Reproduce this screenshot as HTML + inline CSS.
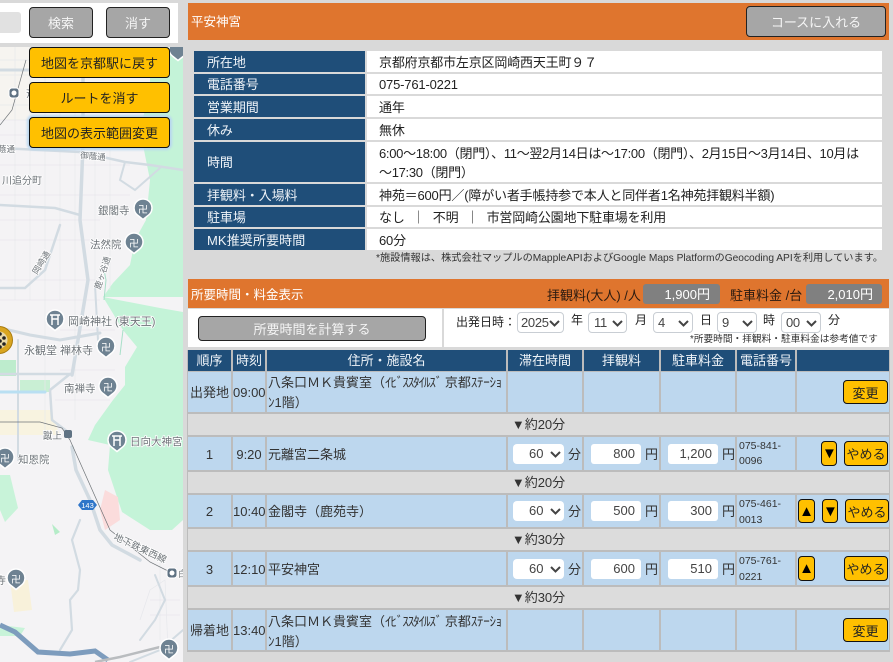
<!DOCTYPE html>
<html lang="ja">
<head>
<meta charset="utf-8">
<title>平安神宮</title>
<style>
html,body{margin:0;padding:0;width:893px;height:662px;overflow:hidden;background:#d9d9d9}
body{position:relative;font-family:"Liberation Sans","Noto Sans CJK JP",sans-serif;font-size:13px;color:#333}
.a{position:absolute;white-space:nowrap;box-sizing:border-box}
.o{background:#df752e}
.l{background:#1f4e79;color:#eef3f8;left:194px;width:171px;padding-left:13px;letter-spacing:-.08px}
.v{background:#fff;color:#222;left:367px;width:515px;padding-left:12px;letter-spacing:-.18px}
.h{background:#1f4e79;color:#eef3f8;top:350px;height:21px;line-height:21px;text-align:center}
.c{background:#bdd7ee}
.s{background:#dcdcdc;left:188px;width:701px;text-align:center;color:#333;height:21px;line-height:21px}
.b{border:1px solid #111;border-radius:4px;background:#ffc000;color:#222;text-align:center;font-family:inherit;font-size:13px;padding:0}
.b.ar{color:#000;font-size:15px;line-height:1;overflow:hidden}
.g{border:1px solid #222;border-radius:4px;background:#a6a6a6;color:#f5f5f5;text-align:center;font-family:inherit;font-size:13px;padding:0}
.i{background:#fff;border-radius:3px;text-align:right;padding-right:6px;color:#444;height:20px;line-height:20px;width:50px;font-size:13px}
.sel{background:#fff;border-radius:4px;color:#444;font-size:13px}
.sel svg{position:absolute;right:3px;top:7px}
.d{border:1px solid #c9ced4;height:21px;line-height:20px;padding-left:3px;top:312px;letter-spacing:-.3px}
.t{height:20px;line-height:20px;width:51px;left:513px;padding-left:16px}
.p{font-size:10.5px;left:739px;color:#333;line-height:14px}
.k{letter-spacing:-1.1px}
.k2{letter-spacing:-.3px}
.tx{font-size:8.5px;fill:#6d7378;font-family:"Liberation Sans","Noto Sans CJK JP",sans-serif;stroke:#fff;stroke-width:1.6px;paint-order:stroke}
.sw{font-size:10px;fill:#fff;font-family:"Noto Sans CJK JP",sans-serif;text-anchor:middle}
</style>
</head>
<body>

<!-- MAP -->
<svg class="a" style="left:0;top:47px" width="183" height="615" viewBox="0 47 183 615">
<rect x="0" y="47" width="183" height="615" fill="#f4f3f5"/>
<path d="M150 47L183 47L183 297L150 297L103 297L113 283L130 265L135 240L146 220L150 180L140 130L150 90Z" fill="#c4f3d8"/>
<path d="M103 297L160 308L183 312L183 520L172 530L150 530L122 512L108 470L110 445L88 440L95 425L113 400L125 385L125 367L137 347L123 330Z" fill="#c4f3d8"/>
<path d="M105 490L118 497L120 520L105 530L100 510Z" fill="#fbdcdc"/>
<path d="M0 360H16V376H0Z" fill="#bdeccd"/><path d="M20 380H50V392H20Z" fill="#c9efd4"/>
<path d="M0 475H10L18 508L5 522L0 510Z" fill="#c8f3d9"/><path d="M0 625L25 628L20 636H0Z" fill="#c8f3d9"/>
<path d="M52 524L60 532L55 535Z" fill="#b5ecc8"/>
<path d="M10 580H28L32 610L14 612Z" fill="#f8f1da"/>
<path d="M0 410H50L60 435H0Z" fill="#f8f3e0"/>
<path d="M0 47H40L60 110L40 120H0Z" fill="#f7f5ed" opacity=".6"/>
<!-- street texture -->
<g stroke="#e7e8ec" stroke-width=".7" fill="none">
<path d="M0 60H90M0 75H80M0 105H100M0 120H110M0 135H120M0 165H130M0 195H130M0 220H100M0 240H90M0 280H100M0 300H100M60 330H115M60 370H115M55 400H110"/>
<path d="M15 47V300M30 47V300M45 47V440M60 100V300M75 110V420M95 120V300M110 150V290"/>
<path d="M140 620L150 590L165 580L168 650M150 600H180M150 615H180M160 560V640"/>
</g>
<!-- main roads -->
<g stroke="#d2dbe2" fill="none" stroke-linecap="round">
<path d="M0 70H40L60 66H85" stroke-width="3"/>
<path d="M83 47V145L80 220L88 280L78 340L72 375" stroke-width="3.5"/>
<path d="M0 148L80 152L125 162L150 165L183 170" stroke-width="2.5"/>
<path d="M125 162L120 180L135 190L160 168" stroke-width="2"/>
<path d="M0 205L55 208L80 215" stroke-width="2.5"/>
<path d="M60 225L45 270L25 288H0" stroke-width="2.5"/>
<path d="M95 285L98 340" stroke-width="2"/>
<path d="M0 328L30 335L60 340L100 333" stroke-width="3"/>
<path d="M18 340V460" stroke-width="2"/>
<path d="M0 374H70M70 374L50 390L52 420L68 432" stroke-width="2.5"/>
<path d="M0 392H45" stroke="#b9dff2" stroke-width="3"/>
<path d="M72 447L76 470L90 500L100 530L112 545L140 560" stroke-width="3.5"/>
<path d="M80 520L72 540L80 570L78 590L70 600L72 630L60 650" stroke-width="2.2"/>
<path d="M155 575L165 600L155 620L140 640" stroke-width="2"/>
<path d="M183 630L160 650L130 662" stroke-width="2"/>
</g>
<path d="M104 300L106 280L103 265" stroke="#a7dfc8" fill="none"/>
<path d="M123 330L120 355" stroke="#a7dfc8" fill="none"/>
<path d="M0 625L15 632L38 652L70 654L95 651L108 660" stroke="#7d9cbd" stroke-width="5" fill="none"/>
<path d="M95 662L120 657L160 647" stroke="#b9bcbf" stroke-width="2.5" fill="none"/>
<path d="M70 440L110 530L150 562L172 573" stroke="#6f7478" stroke-width=".7" fill="none"/>
<path d="M0 422H40L62 428L70 440" stroke="#6f7478" stroke-width=".7" fill="none"/>
<path d="M26 60L12 110L0 125" stroke="#6f7478" stroke-width=".7" fill="none"/>
<!-- 143 shield -->
<path d="M82 500H93L97 505L93 510H82L78 505Z" fill="#2f76c9"/>
<text x="87.500" y="508" font-size="7.500" fill="#fff" text-anchor="middle" font-family="Liberation Sans">143</text>
<!-- labels -->
<text class="tx" x="-2" y="152">蔭通</text>
<text class="tx" x="80" y="158" transform="rotate(5 80 158)">御蔭通</text>
<text class="tx" x="2" y="184" style="font-size:10px">川追分町</text>
<text class="tx" x="98" y="214" style="font-size:10.500px">銀閣寺</text>
<text class="tx" x="90" y="248" style="font-size:10.500px">法然院</text>
<text class="tx" transform="translate(37 275) rotate(-58)">岡崎通</text>
<text class="tx" transform="translate(100 290) rotate(-72)">鹿ヶ谷通</text>
<text class="tx" x="68" y="325" style="font-size:11px">岡崎神社 (東天王)</text>
<text class="tx" x="24" y="354" style="font-size:11px">永観堂 禅林寺</text>
<text class="tx" x="64" y="392" style="font-size:10.500px">南禅寺</text>
<text class="tx" x="43" y="439" style="font-size:9.500px">蹴上</text>
<text class="tx" x="130" y="445" style="font-size:10.500px">日向大神宮</text>
<text class="tx" x="18" y="463" style="font-size:10.500px">知恩院</text>
<text class="tx" x="-4" y="584" style="font-size:10px">寺</text>
<text class="tx" x="26" y="97" style="font-size:9.500px">斉</text>
<text class="tx" transform="translate(113 539) rotate(25)" style="font-size:9.500px">地下鉄東西線</text>
<text class="tx" x="178" y="577" style="font-size:9px">白</text>
<!-- pins -->
<g fill="#6e8292" stroke="#fff" stroke-width="1.500">
<path d="M143 199a9 9 0 0 1 5 16.500l-5 4-5-4A9 9 0 0 1 143 199Z"/>
<path d="M134 233a9 9 0 0 1 5 16.500l-5 4-5-4A9 9 0 0 1 134 233Z"/>
<path d="M106 337a9 9 0 0 1 5 16.500l-5 4-5-4A9 9 0 0 1 106 337Z"/>
<path d="M108 377a9 9 0 0 1 5 16.500l-5 4-5-4A9 9 0 0 1 108 377Z"/>
<path d="M5 448a9 9 0 0 1 5 16.500l-5 4-5-4A9 9 0 0 1 5 448Z"/>
<path d="M16 569a9 9 0 0 1 5 16.500l-5 4-5-4A9 9 0 0 1 16 569Z"/>
<path d="M169 639a9 9 0 0 1 5 16.500l-5 4-5-4A9 9 0 0 1 169 639Z"/>
<path d="M178 40a9 9 0 0 1 5 16.500l-5 4-5-4A9 9 0 0 1 178 40Z"/>
<path d="M55 310a9 9 0 0 1 5 16.500l-5 4-5-4A9 9 0 0 1 55 310Z"/>
<path d="M117 431a9 9 0 0 1 5 16.500l-5 4-5-4A9 9 0 0 1 117 431Z"/>
</g>
<text class="sw" x="143" y="213">卍</text><text class="sw" x="134" y="247">卍</text><text class="sw" x="106" y="351">卍</text><text class="sw" x="108" y="391">卍</text><text class="sw" x="5" y="462">卍</text><text class="sw" x="16" y="583">卍</text><text class="sw" x="169" y="653">卍</text>
<path d="M50 315H60M52 315V325M58 315V325M52 319H58" stroke="#fff" stroke-width="1.500" fill="none"/>
<path d="M112 436H122M114 436V446M120 436V446M114 440H120" stroke="#fff" stroke-width="1.500" fill="none"/>
<rect x="9" y="88" width="10" height="10" rx="3" fill="#5f7283" stroke="#fff"/><circle cx="14" cy="93" r="2.500" fill="#fff"/>
<rect x="167" y="568" width="10" height="10" rx="3" fill="#5f7283" stroke="#fff"/><circle cx="172" cy="573" r="2.500" fill="#fff"/>
<rect x="64" y="430" width="8" height="8" rx="2" fill="#5f7283"/>
<!-- marker -->
<circle cx="-1" cy="340" r="13.500" fill="#d9a521" stroke="#a97c10"/>
<circle cx="-1" cy="340" r="8.500" fill="#e9d9a9"/>
<g fill="#222"><circle cx="0" cy="334" r="1.800"/><circle cx="4" cy="338" r="1.800"/><circle cx="0" cy="341" r="1.800"/><circle cx="4" cy="344" r="1.800"/><circle cx="0" cy="347" r="1.800"/></g>
</svg>

<!-- map top controls -->
<div class="a" style="left:0;top:3px;width:178px;height:40px;background:#fff"></div>
<div class="a" style="left:0;top:12px;width:21px;height:21px;background:#e1e1e1;border-radius:0 3px 3px 0"></div>
<button class="a g" style="left:29px;top:7px;width:64px;height:31px">検索</button>
<button class="a g" style="left:106px;top:7px;width:64px;height:31px">消す</button>
<button class="a b" style="left:29px;top:47px;width:141px;height:31px">地図を京都駅に戻す</button>
<button class="a b" style="left:29px;top:82px;width:141px;height:31px">ルートを消す</button>
<button class="a b" style="left:29px;top:117px;width:141px;height:31px;box-shadow:0 0 2px 2px #b8d6f0">地図の表示範囲変更</button>

<!-- Title bar -->
<div class="a o" style="left:188px;top:3px;width:701px;height:37px;line-height:39px;padding-left:3px;color:#fff;font-size:12.500px">平安神宮</div>
<button class="a g" style="left:746px;top:6px;width:140px;height:31px;border-radius:4px">コースに入れる</button>

<!-- Info table -->
<div class="a l" style="top:51px;height:21px;line-height:23px">所在地</div>
<div class="a v" style="top:51px;height:21px;line-height:23px">京都府京都市左京区岡崎西天王町９７</div>
<div class="a l" style="top:74px;height:20px;line-height:22px">電話番号</div>
<div class="a v" style="top:74px;height:20px;line-height:22px">075-761-0221</div>
<div class="a l" style="top:96px;height:21px;line-height:23px">営業期間</div>
<div class="a v" style="top:96px;height:21px;line-height:23px">通年</div>
<div class="a l" style="top:119px;height:21px;line-height:23px">休み</div>
<div class="a v" style="top:119px;height:21px;line-height:23px">無休</div>
<div class="a l" style="top:142px;height:40px;line-height:41px">時間</div>
<div class="a v" style="top:142px;height:40px;line-height:19px;padding-top:2px;letter-spacing:-.3px">6:00～18:00（閉門）、11～翌2月14日は～17:00（閉門）、2月15日～3月14日、10月は<br>～17:30（閉門）</div>
<div class="a l" style="top:184px;height:21px;line-height:23px">拝観料・入場料</div>
<div class="a v" style="top:184px;height:21px;line-height:23px">神苑＝600円／(障がい者手帳持参で本人と同伴者1名神苑拝観料半額)</div>
<div class="a l" style="top:207px;height:20px;line-height:22px">駐車場</div>
<div class="a v" style="top:207px;height:20px;line-height:22px;word-spacing:.4px">なし &nbsp;｜ &nbsp;不明 &nbsp;｜ &nbsp;市営岡崎公園地下駐車場を利用</div>
<div class="a l" style="top:229px;height:21px;line-height:23px;letter-spacing:.1px">MK推奨所要時間</div>
<div class="a v" style="top:229px;height:21px;line-height:23px">60分</div>
<div class="a" style="left:376px;top:252px;width:510px;height:14px;line-height:14px;font-size:10.200px;color:#333">*施設情報は、株式会社マップルのMappleAPIおよびGoogle Maps PlatformのGeocoding APIを利用しています。</div>

<!-- Fee header -->
<div class="a o" style="left:188px;top:279px;width:701px;height:29px;line-height:32px;padding-left:3px;color:#fff;font-size:12.500px">所要時間・料金表示</div>
<div class="a" style="left:547px;top:285px;height:20px;line-height:22px;color:#2a1a10">拝観料(大人) /人</div>
<div class="a" style="left:643px;top:284px;width:77px;height:20px;line-height:22px;background:#808080;border-radius:3px;color:#fff;text-align:right;padding-right:10px">1,900円</div>
<div class="a" style="left:730px;top:285px;height:20px;line-height:22px;color:#2a1a10">駐車料金 /台</div>
<div class="a" style="left:806px;top:284px;width:76px;height:20px;line-height:22px;background:#808080;border-radius:3px;color:#fff;text-align:right;padding-right:9px">2,010円</div>

<!-- Calc band -->
<div class="a" style="left:188px;top:309px;width:254px;height:38px;background:#fff"></div>
<div class="a" style="left:444px;top:309px;width:445px;height:38px;background:#fff"></div>
<button class="a g" style="left:198px;top:316px;width:228px;height:25px">所要時間を計算する</button>
<div class="a" style="left:456px;top:312px;height:20px;line-height:20px;font-size:12px;color:#222">出発日時：</div>
<div class="a sel d" style="left:517px;width:47px">2025<svg width="11" height="7" viewBox="0 0 11 7"><path d="M1 1l4.500 4.500L10 1" fill="none" stroke="#444" stroke-width="2"/></svg></div>
<div class="a" style="left:571px;top:310px;line-height:20px;font-size:12px;color:#222">年</div>
<div class="a sel d" style="left:588px;width:39px;padding-left:5px">11<svg width="11" height="7" viewBox="0 0 11 7"><path d="M1 1l4.500 4.500L10 1" fill="none" stroke="#444" stroke-width="2"/></svg></div>
<div class="a" style="left:635px;top:310px;line-height:20px;font-size:12px;color:#222">月</div>
<div class="a sel d" style="left:653px;width:40px;padding-left:4px">4<svg width="11" height="7" viewBox="0 0 11 7"><path d="M1 1l4.500 4.500L10 1" fill="none" stroke="#444" stroke-width="2"/></svg></div>
<div class="a" style="left:700px;top:310px;line-height:20px;font-size:12px;color:#222">日</div>
<div class="a sel d" style="left:717px;width:40px;padding-left:4px">9<svg width="11" height="7" viewBox="0 0 11 7"><path d="M1 1l4.500 4.500L10 1" fill="none" stroke="#444" stroke-width="2"/></svg></div>
<div class="a" style="left:763px;top:310px;line-height:20px;font-size:12px;color:#222">時</div>
<div class="a sel d" style="left:781px;width:40px;padding-left:4px">00<svg width="11" height="7" viewBox="0 0 11 7"><path d="M1 1l4.500 4.500L10 1" fill="none" stroke="#444" stroke-width="2"/></svg></div>
<div class="a" style="left:828px;top:310px;line-height:20px;font-size:12px;color:#222">分</div>
<div class="a" style="left:690px;top:333px;width:190px;height:13px;line-height:13px;font-size:9.700px;color:#333">*所要時間・拝観料・駐車料金は参考値です</div>

<!-- Table frame -->
<div class="a" style="left:187px;top:349px;width:703px;height:303px;background:#bcbcbc"></div>
<div class="a" style="left:187px;top:347px;width:703px;height:3px;background:#d9d9d9"></div>

<!-- Table header -->
<div class="a h" style="left:188px;width:43px">順序</div>
<div class="a h" style="left:233px;width:32px">時刻</div>
<div class="a h" style="left:267px;width:239px">住所・施設名</div>
<div class="a h" style="left:508px;width:74px">滞在時間</div>
<div class="a h" style="left:584px;width:75px">拝観料</div>
<div class="a h" style="left:661px;width:74px">駐車料金</div>
<div class="a h" style="left:737px;width:58px">電話番号</div>
<div class="a h" style="left:797px;width:92px"></div>

<!-- Row: start -->
<div class="a c" style="left:188px;top:372px;width:43px;height:40px;line-height:41px;text-align:center">出発地</div>
<div class="a c" style="left:233px;top:372px;width:32px;height:40px;line-height:41px;text-align:center">09:00</div>
<div class="a c" style="left:267px;top:372px;width:239px;height:40px;line-height:20px;padding:1px 0 0 1px;overflow:hidden">八条口ＭＫ貴賓室（<span class="k">ｲﾋﾞｽｽﾀｲﾙｽﾞ</span> 京都<span class="k2">ｽﾃｰｼｮ</span><br>ﾝ1階）</div>
<div class="a c" style="left:508px;top:372px;width:74px;height:40px"></div>
<div class="a c" style="left:584px;top:372px;width:75px;height:40px"></div>
<div class="a c" style="left:661px;top:372px;width:74px;height:40px"></div>
<div class="a c" style="left:737px;top:372px;width:58px;height:40px"></div>
<div class="a c" style="left:797px;top:372px;width:92px;height:40px"></div>
<button class="a b" style="left:843px;top:380px;width:45px;height:24px">変更</button>

<div class="a s" style="top:414px">▼約20分</div>

<!-- Row 1 -->
<div class="a c" style="left:188px;top:437px;width:43px;height:33px;line-height:35px;text-align:center">1</div>
<div class="a c" style="left:233px;top:437px;width:32px;height:33px;line-height:35px;text-align:center">9:20</div>
<div class="a c" style="left:267px;top:437px;width:239px;height:33px;line-height:35px;padding-left:1px">元離宮二条城</div>
<div class="a c" style="left:508px;top:437px;width:74px;height:33px"></div>
<div class="a c" style="left:584px;top:437px;width:75px;height:33px"></div>
<div class="a c" style="left:661px;top:437px;width:74px;height:33px"></div>
<div class="a c" style="left:737px;top:437px;width:58px;height:33px"></div>
<div class="a c" style="left:797px;top:437px;width:92px;height:33px"></div>
<div class="a sel t" style="top:444px">60<svg width="11" height="7" viewBox="0 0 11 7"><path d="M1 1l4.500 4.500L10 1" fill="none" stroke="#444" stroke-width="2"/></svg></div>
<div class="a" style="left:568px;top:444px;line-height:21px">分</div>
<div class="a i" style="left:591px;top:444px">800</div>
<div class="a" style="left:645px;top:444px;line-height:21px">円</div>
<div class="a i" style="left:668px;top:444px">1,200</div>
<div class="a" style="left:722px;top:444px;line-height:21px">円</div>
<div class="a p" style="top:439px;line-height:15px">075-841-<br>0096</div>
<button class="a b ar" style="left:821px;top:441px;width:16px;height:25px">▼</button>
<button class="a b" style="left:844px;top:441px;width:44px;height:25px">やめる</button>

<div class="a s" style="top:472px">▼約20分</div>

<!-- Row 2 -->
<div class="a c" style="left:188px;top:495px;width:43px;height:32px;line-height:34px;text-align:center">2</div>
<div class="a c" style="left:233px;top:495px;width:32px;height:32px;line-height:34px;text-align:center">10:40</div>
<div class="a c" style="left:267px;top:495px;width:239px;height:32px;line-height:34px;padding-left:1px">金閣寺（鹿苑寺）</div>
<div class="a c" style="left:508px;top:495px;width:74px;height:32px"></div>
<div class="a c" style="left:584px;top:495px;width:75px;height:32px"></div>
<div class="a c" style="left:661px;top:495px;width:74px;height:32px"></div>
<div class="a c" style="left:737px;top:495px;width:58px;height:32px"></div>
<div class="a c" style="left:797px;top:495px;width:92px;height:32px"></div>
<div class="a sel t" style="top:501px">60<svg width="11" height="7" viewBox="0 0 11 7"><path d="M1 1l4.500 4.500L10 1" fill="none" stroke="#444" stroke-width="2"/></svg></div>
<div class="a" style="left:568px;top:501px;line-height:21px">分</div>
<div class="a i" style="left:591px;top:501px">500</div>
<div class="a" style="left:645px;top:501px;line-height:21px">円</div>
<div class="a i" style="left:668px;top:501px">300</div>
<div class="a" style="left:722px;top:501px;line-height:21px">円</div>
<div class="a p" style="top:496px;line-height:16px">075-461-<br>0013</div>
<button class="a b ar" style="left:798px;top:499px;width:17px;height:24px">▲</button>
<button class="a b ar" style="left:822px;top:499px;width:16px;height:24px">▼</button>
<button class="a b" style="left:845px;top:499px;width:44px;height:24px">やめる</button>

<div class="a s" style="top:529px">▼約30分</div>

<!-- Row 3 -->
<div class="a c" style="left:188px;top:552px;width:43px;height:33px;line-height:35px;text-align:center">3</div>
<div class="a c" style="left:233px;top:552px;width:32px;height:33px;line-height:35px;text-align:center">12:10</div>
<div class="a c" style="left:267px;top:552px;width:239px;height:33px;line-height:35px;padding-left:1px">平安神宮</div>
<div class="a c" style="left:508px;top:552px;width:74px;height:33px"></div>
<div class="a c" style="left:584px;top:552px;width:75px;height:33px"></div>
<div class="a c" style="left:661px;top:552px;width:74px;height:33px"></div>
<div class="a c" style="left:737px;top:552px;width:58px;height:33px"></div>
<div class="a c" style="left:797px;top:552px;width:92px;height:33px"></div>
<div class="a sel t" style="top:559px">60<svg width="11" height="7" viewBox="0 0 11 7"><path d="M1 1l4.500 4.500L10 1" fill="none" stroke="#444" stroke-width="2"/></svg></div>
<div class="a" style="left:568px;top:559px;line-height:21px">分</div>
<div class="a i" style="left:591px;top:559px">600</div>
<div class="a" style="left:645px;top:559px;line-height:21px">円</div>
<div class="a i" style="left:668px;top:559px">510</div>
<div class="a" style="left:722px;top:559px;line-height:21px">円</div>
<div class="a p" style="top:553px;line-height:16px">075-761-<br>0221</div>
<button class="a b ar" style="left:798px;top:556px;width:17px;height:25px">▲</button>
<button class="a b" style="left:844px;top:556px;width:44px;height:25px">やめる</button>

<div class="a s" style="top:587px">▼約30分</div>

<!-- Row: end -->
<div class="a c" style="left:188px;top:610px;width:43px;height:40px;line-height:41px;text-align:center">帰着地</div>
<div class="a c" style="left:233px;top:610px;width:32px;height:40px;line-height:41px;text-align:center">13:40</div>
<div class="a c" style="left:267px;top:610px;width:239px;height:40px;line-height:20px;padding:2px 0 0 1px;overflow:hidden">八条口ＭＫ貴賓室（<span class="k">ｲﾋﾞｽｽﾀｲﾙｽﾞ</span> 京都<span class="k2">ｽﾃｰｼｮ</span><br>ﾝ1階）</div>
<div class="a c" style="left:508px;top:610px;width:74px;height:40px"></div>
<div class="a c" style="left:584px;top:610px;width:75px;height:40px"></div>
<div class="a c" style="left:661px;top:610px;width:74px;height:40px"></div>
<div class="a c" style="left:737px;top:610px;width:58px;height:40px"></div>
<div class="a c" style="left:797px;top:610px;width:92px;height:40px"></div>
<button class="a b" style="left:843px;top:618px;width:45px;height:24px">変更</button>

</body>
</html>
